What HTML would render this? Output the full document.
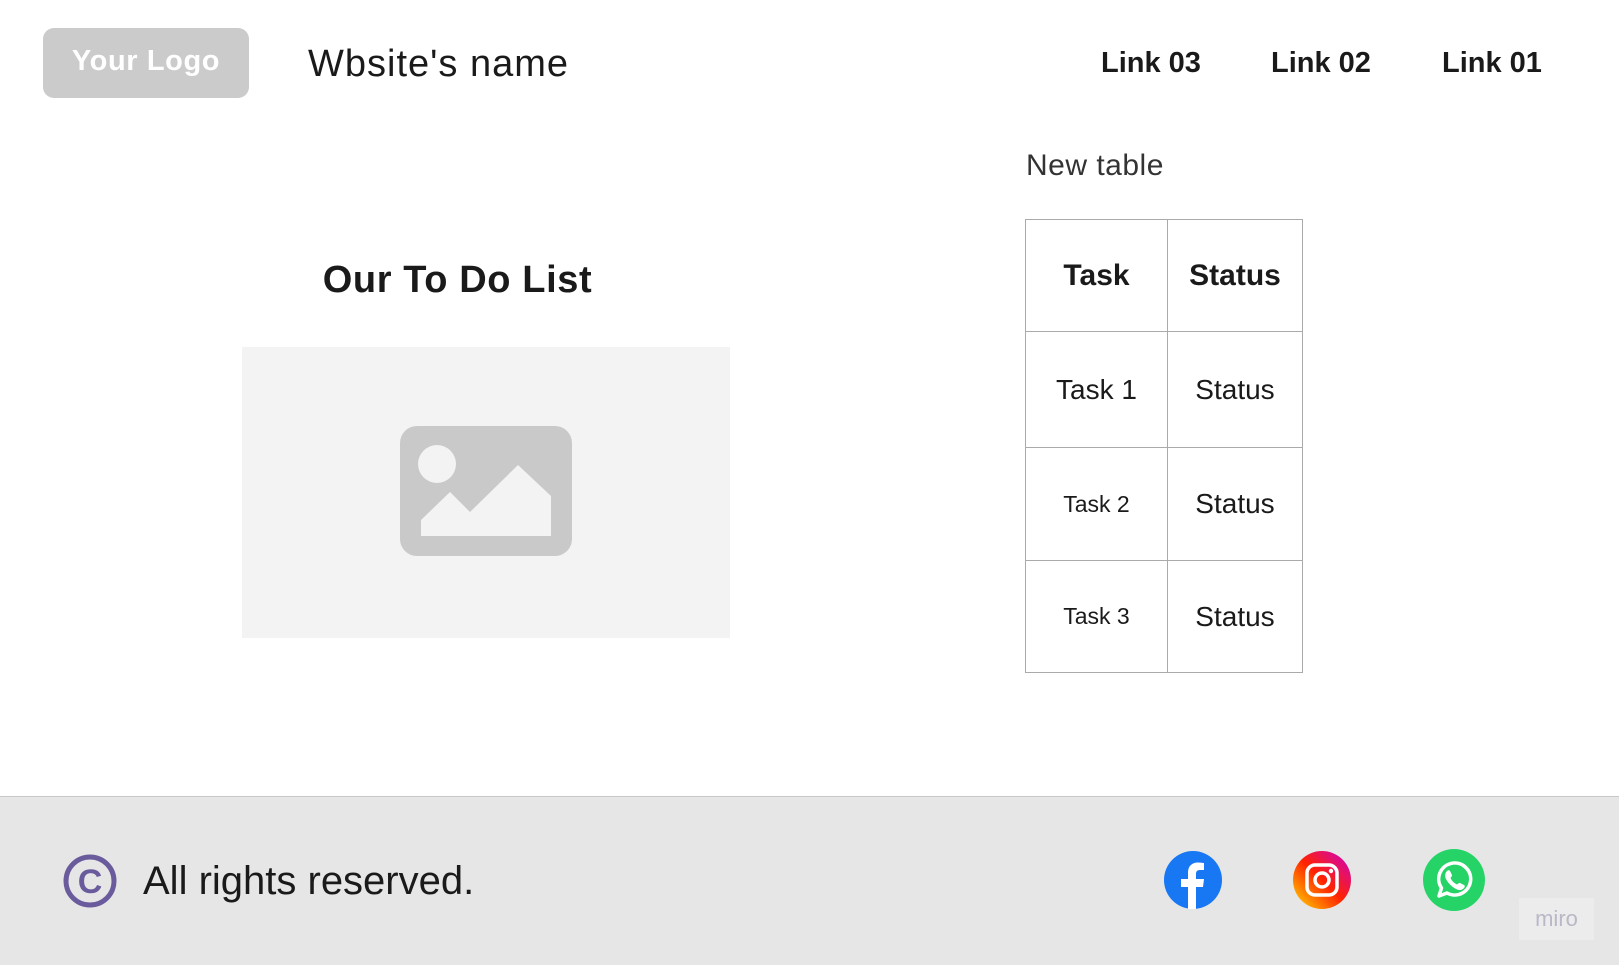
<!DOCTYPE html><html><head><style>
body{margin:0;width:1619px;height:964px;position:relative;background:#fff;font-family:"Liberation Sans",sans-serif;overflow:hidden;color:#1a1a1a}
.a{position:absolute;white-space:nowrap}
td{border:1px solid #aaa;text-align:center;padding:0}
</style></head><body>
<div class="a" style="left:43px;top:28px;width:206px;height:70px;background:#cbcbcb;border-radius:11px;color:#fff;font-weight:bold;font-size:29px;line-height:66px;text-align:center;letter-spacing:0.6px">Your Logo</div>
<div class="a" style="left:308px;top:43px;font-size:38px;letter-spacing:1px">Wbsite's name</div>
<div class="a" style="left:1101px;top:47px;font-size:29px;font-weight:bold">Link 03</div>
<div class="a" style="left:1271px;top:47px;font-size:29px;font-weight:bold">Link 02</div>
<div class="a" style="left:1442px;top:47px;font-size:29px;font-weight:bold">Link 01</div>
<div class="a" style="left:1026px;top:149px;font-size:30px;color:#333;letter-spacing:0.5px">New table</div>
<div class="a" style="left:0;width:915px;text-align:center;top:259px;font-size:38px;font-weight:bold;letter-spacing:0.6px">Our To Do List</div>
<div class="a" style="left:242px;top:347px;width:488px;height:291px;background:#f3f3f3"></div>
<svg class="a" style="left:400px;top:426px" width="172" height="130" viewBox="0 0 172 130"><rect width="172" height="130" rx="17" fill="#c9c9c9"/><circle cx="37" cy="38" r="19" fill="#f3f3f3"/><path d="M21 110V94L50 66L70 86L118 39L151 70V110Z" fill="#f3f3f3"/></svg>
<table class="a" style="left:1025px;top:219px;width:278px;height:454px;border-collapse:collapse;font-size:28px">
<tr style="height:112px;font-weight:bold;font-size:30px"><td style="width:141px">Task</td><td>Status</td></tr>
<tr style="height:116px"><td>Task 1</td><td>Status</td></tr>
<tr style="height:113px"><td style="font-size:23px">Task 2</td><td>Status</td></tr>
<tr><td style="font-size:23px">Task 3</td><td>Status</td></tr>
</table>
<div class="a" style="left:0;top:796px;width:1619px;height:168px;background:#e6e6e6;border-top:1px solid #c8c8c8"></div>
<svg class="a" style="left:62px;top:853px" width="56" height="56" viewBox="0 0 56 56"><circle cx="28" cy="28" r="24" fill="none" stroke="#6a5b9c" stroke-width="5"/><text x="28" y="40" text-anchor="middle" font-size="34" font-weight="bold" fill="#6a5b9c" font-family="Liberation Sans">C</text></svg>
<div class="a" style="left:143px;top:859px;font-size:40px;">All rights reserved.</div>
<svg class="a" style="left:1164px;top:851px" width="58" height="58" viewBox="0 0 58 58"><circle cx="29" cy="29" r="29" fill="#1877f2"/><path d="M32 58V36h7l1-8h-8v-5c0-2.5 1-4 4-4h4v-7c-1 0-4-.5-6-.5-6 0-10 3.5-10 10V28h-7v8h7v22z" fill="#fff"/></svg>
<svg class="a" style="left:1293px;top:851px" width="58" height="58" viewBox="0 0 58 58"><defs><linearGradient id="g" x1="0" y1="1" x2="1" y2="0"><stop offset="0" stop-color="#fd0"/><stop offset=".5" stop-color="#f20"/><stop offset="1" stop-color="#c0c"/></linearGradient></defs><circle cx="29" cy="29" r="29" fill="url(#g)"/><rect x="14" y="14" width="30" height="30" rx="8" fill="none" stroke="#fff" stroke-width="3.5"/><circle cx="29" cy="29" r="7" fill="none" stroke="#fff" stroke-width="3.5"/><circle cx="38" cy="20" r="2.2" fill="#fff"/></svg>
<svg class="a" style="left:1423px;top:849px" width="62" height="62" viewBox="0 0 62 62"><circle cx="31" cy="31" r="31" fill="#25d366"/><path d="M16 47l2.5-8A16 16 0 1 1 24 44z" fill="none" stroke="#fff" stroke-width="3.5" stroke-linejoin="round"/><path d="M24 22c1-1 2.5-1 3 0l2 4c.4 1-1 2-1.5 3 1.5 3 3.5 5 6.5 6.5 1-.5 2-2 3-1.5l4 2c1 .5 1 2 0 3-2 2-4 3-8 1-4-2-8-6-10-10-1.5-3-1-6 1-8z" fill="#fff"/></svg>
<div class="a" style="left:1519px;top:898px;width:75px;height:42px;background:#ececec;color:#b8b8c8;font-size:22px;line-height:42px;text-align:center">miro</div>
</body></html>
